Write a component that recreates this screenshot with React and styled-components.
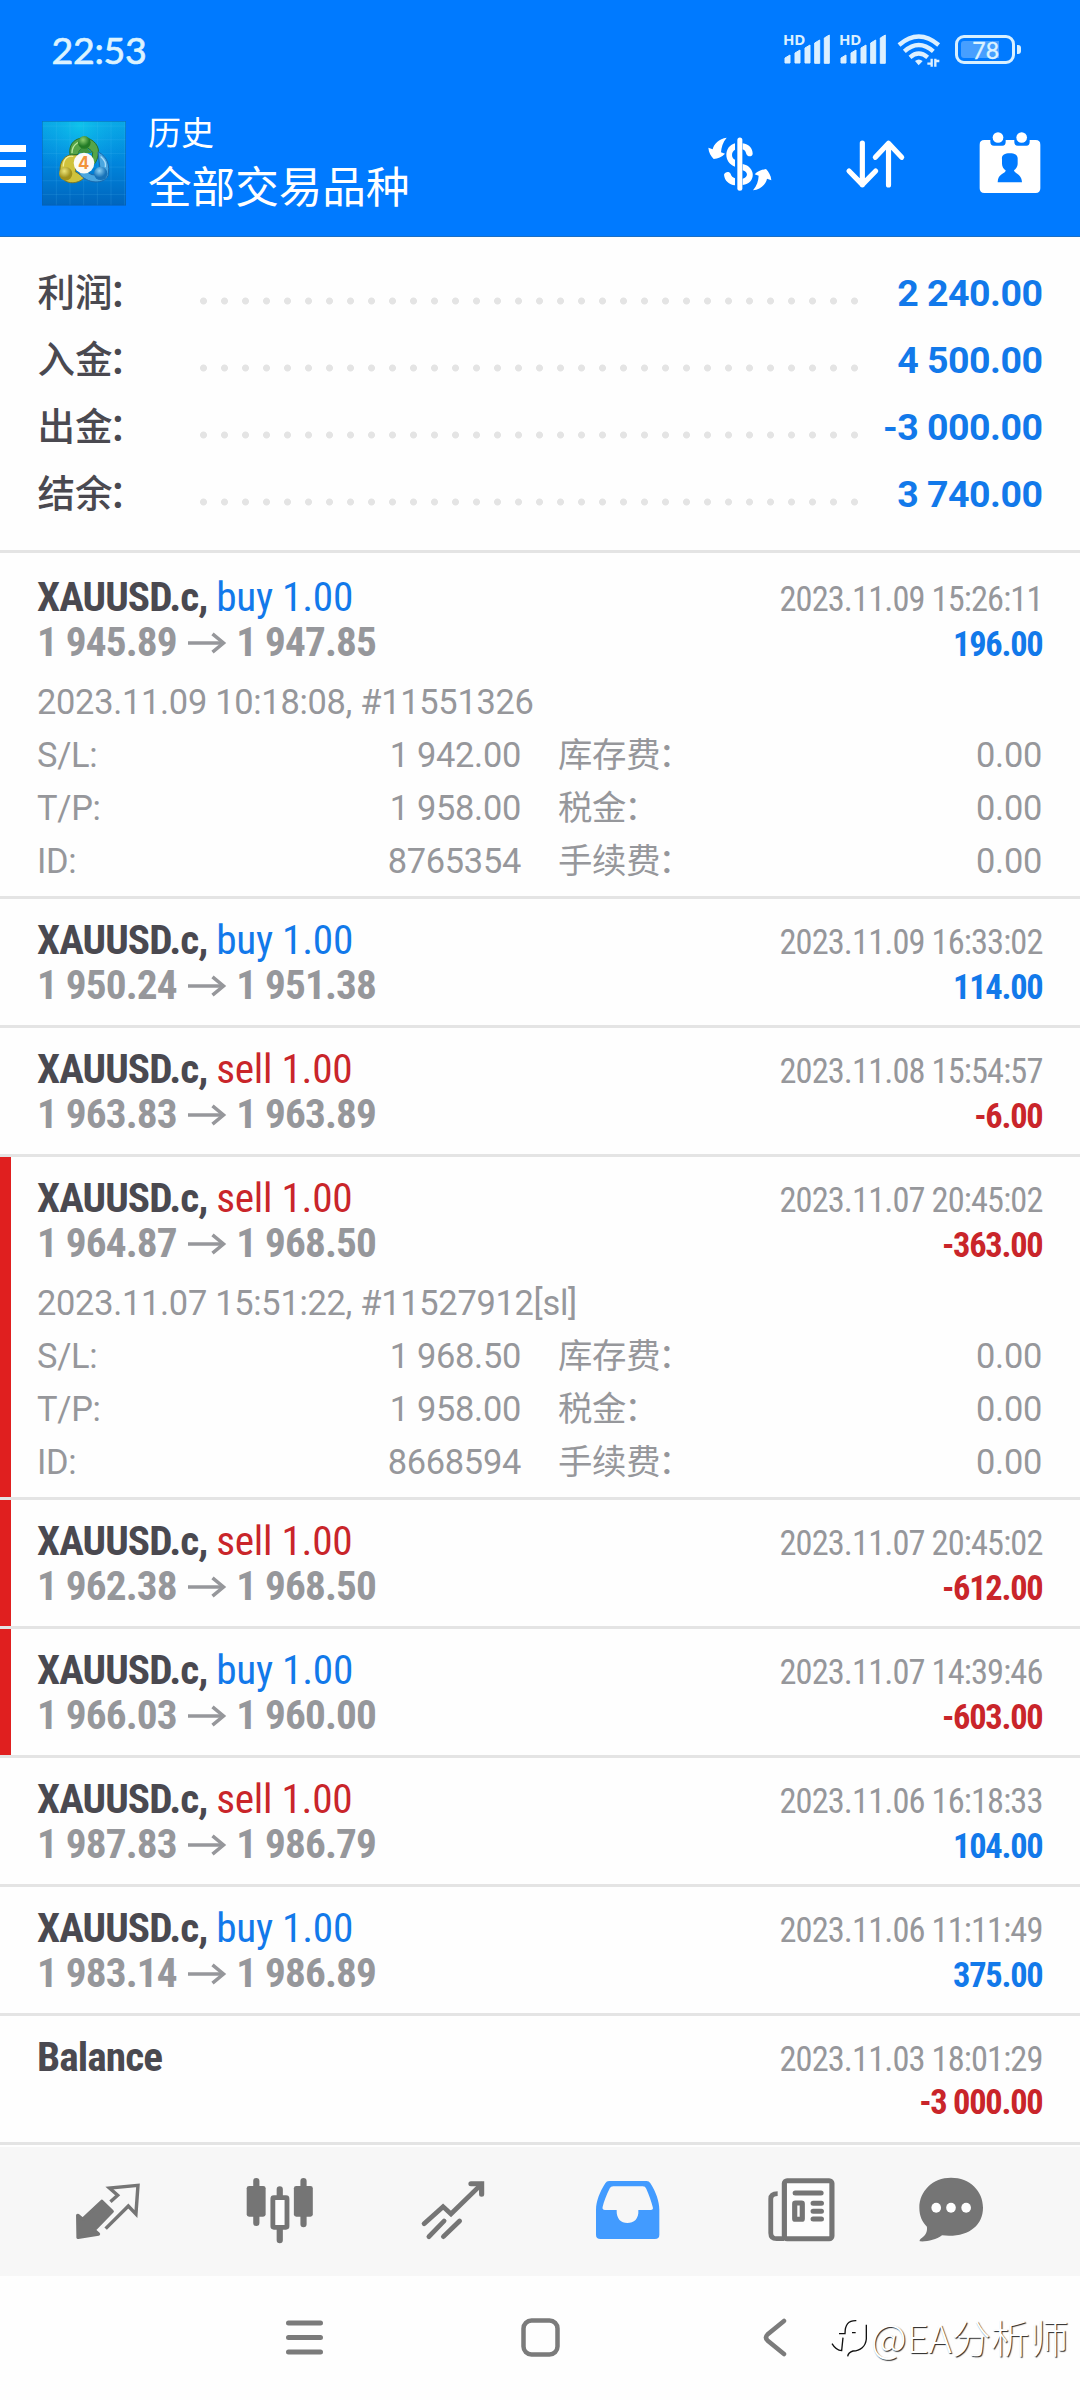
import React from "react";
import styled, { createGlobalStyle } from "styled-components";

const BLUE = "#1279ea";
const RED = "#c9252a";
const GRAY = "#96979b";
const DARK = "#4a4950";

const GlobalStyle = createGlobalStyle`
  * { box-sizing: border-box; }
  body { margin: 0; background: #fefefe; }
`;

const Screen = styled.div`
  width: 1080px;
  height: 2400px;
  display: flex;
  flex-direction: column;
  overflow: hidden;
  background: #fefefe;
  font-family: Roboto, "Noto Sans CJK SC", sans-serif;
`;

const Icon = styled.svg`
  display: block;
  flex: none;
  overflow: visible;
`;

/* ---------- header ---------- */

const Header = styled.header`
  height: 237px;
  background: #007aff;
  border-bottom: 1px solid #1b6fc4;
  color: #fff;
`;

const StatusBar = styled.div`
  height: 100px;
  padding: 0 59px 0 51.5px;
  display: flex;
  align-items: center;
`;

const Clock = styled.span`
  flex: 1;
  font-family: Lato, sans-serif;
  font-size: 37.5px;
  line-height: 46px;
  letter-spacing: -0.3px;
  color: #dcf3ff;
  -webkit-text-stroke: 0.7px #dcf3ff;
  padding-bottom: 1px;
`;

const StatusIcons = styled.div`
  display: flex;
  align-items: flex-start;
  height: 32px;
  color: #dcf0ff;
`;

const Signal = styled.div`
  width: 46px;
  margin-right: 10px;
  display: grid;
`;

const SignalLabel = styled.span`
  grid-area: 1 / 1;
  margin: -1px 0 0 -2px;
  font-family: "Open Sans", sans-serif;
  font-weight: 700;
  font-size: 15px;
  line-height: 13px;
  letter-spacing: -0.3px;
`;

const SignalBars = styled(Icon)`
  grid-area: 1 / 1;
  margin-left: -2px;
`;

const Battery = styled.div`
  display: flex;
  align-items: center;
  margin: 1px 0 0 14px;
`;

const BatteryBody = styled.div`
  width: 60px;
  height: 29px;
  border: 3px solid #d8f0ff;
  border-radius: 9px;
  padding: 3px;
`;

const BatteryCharge = styled.div`
  width: 38px;
  height: 17px;
  border-radius: 3px 0 0 3px;
  background: #479fff;
  text-align: right;
  font-family: Lato, sans-serif;
  font-size: 23px;
  line-height: 18px;
  color: #dcf3ff;
  -webkit-text-stroke: 0.4px #dcf3ff;
`;

const BatteryTip = styled.div`
  width: 4px;
  height: 9px;
  margin-left: 2px;
  border-radius: 0 3px 3px 0;
  background: #d8f0ff;
`;

const AppBar = styled.div`
  height: 136px;
  padding: 0 38px 9px 0;
  display: flex;
  align-items: center;
`;

const MenuBars = styled.div`
  width: 26px;
  height: 38px;
  margin-right: 16px;
  display: flex;
  flex-direction: column;
  justify-content: space-between;
`;

const MenuBar = styled.span`
  height: 7px;
  background: #fff;
`;

const Titles = styled.div`
  flex: 1;
  margin-left: 22px;
  padding-bottom: 4px;
`;

const Caption = styled.div`
  font-size: 33px;
  line-height: 54px;
`;

const Heading = styled.div`
  font-size: 43.6px;
  line-height: 55px;
`;

const Actions = styled.div`
  display: flex;
  align-items: center;
  gap: 72px;
`;

/* ---------- summary ---------- */

const Summary = styled.section`
  padding: 23px 37.5px 22px;
  border-bottom: 3px solid #e4e4e4;
`;

const SummaryRow = styled.div`
  height: 67px;
  line-height: 67px;
  display: flex;
  font-size: 37.5px;
`;

const SummaryLabel = styled.span`
  width: 155px;
  font-weight: 500;
  color: ${DARK};
`;

const Colon = styled.span`
  margin-left: ${(p) => p.$shift}px;
`;

const Dots = styled.span`
  width: 672px;
  height: 8px;
  margin-top: 37px;
  background: radial-gradient(circle at center, #e4e4e4 3.1px, transparent 3.9px) 0 0 / 21px 8px repeat-x;
`;

const SummaryValue = styled.span`
  flex: 1;
  text-align: right;
  font-weight: 700;
  letter-spacing: -0.5px;
  white-space: nowrap;
  color: ${BLUE};
`;

/* ---------- deals ---------- */

const DealList = styled.main`
  padding-top: 3px;
`;

const DealItem = styled.article`
  display: flex;
  border-bottom: 3px solid #e4e4e4;
`;

const Stripe = styled.span`
  width: 11px;
  background: ${(p) => (p.$on ? "#e01f1f" : "transparent")};
`;

const DealBody = styled.div`
  flex: 1;
  padding: 19px 37.5px ${(p) => (p.$open ? 8 : 17)}px 26px;
`;

const Line = styled.div`
  height: 45px;
  line-height: 45px;
  display: flex;
  align-items: baseline;
  justify-content: space-between;
  font-family: "Roboto Condensed", Roboto, sans-serif;
  white-space: nowrap;
`;

const Symbol = styled.span`
  font-size: 41.25px;
  font-weight: 700;
  letter-spacing: -0.9px;
  color: ${DARK};
`;

const Side = styled.span`
  font-weight: 400;
  letter-spacing: -0.25px;
  color: ${(p) => (p.$sell ? RED : BLUE)};
`;

const Prices = styled.span`
  display: flex;
  align-items: baseline;
  font-size: 41.25px;
  font-weight: 700;
  letter-spacing: -0.85px;
  color: ${GRAY};
`;

const Arrow = styled(Icon)`
  margin: 0 10.5px 0 11px;
  align-self: center;
`;

const When = styled.span`
  font-size: 34.4px;
  letter-spacing: -0.88px;
  color: ${GRAY};
`;

const Profit = styled.span`
  font-size: 34.4px;
  font-weight: 700;
  letter-spacing: -1.25px;
  color: ${(p) => (p.$loss ? RED : BLUE)};
`;

const Details = styled.div`
  margin-top: 11px;
  display: grid;
  grid-template-columns: 484px 484px;
  column-gap: 37px;
  font-size: 34.4px;
  line-height: 53px;
  letter-spacing: -0.28px;
  color: ${GRAY};
`;

const OpenInfo = styled.div`
  grid-column: 1 / -1;
  height: 53px;
`;

const Field = styled.div`
  height: 53px;
  display: flex;
  justify-content: space-between;
`;

/* ---------- bottom bars ---------- */

const TabBar = styled.nav`
  height: 129px;
  margin-top: 2px;
  padding-left: 21.6px;
  display: grid;
  grid-template-columns: 172px 172.8px 172.8px 176.6px 171.8px 126.4px;
  background: #f7f7f7;
`;

const Tab = styled.div`
  display: flex;
  justify-content: center;
  padding-top: ${(p) => p.$top}px;
`;

const SystemNav = styled.div`
  height: 124px;
  padding: 42px 0 0 286px;
  display: flex;
  align-items: flex-start;
`;

const NavIcon = styled(Icon)`
  margin-right: ${(p) => p.$gap}px;
`;

const Watermark = styled.div`
  display: flex;
  align-items: center;
  margin-top: -4px;
  font-family: "Noto Sans CJK SC", sans-serif;
  font-weight: 300;
  font-size: 39px;
  line-height: 44px;
  color: #fff;
  text-shadow: 1px 1px 1px #222;
  white-space: nowrap;
`;

const WatermarkMark = styled(Icon)`
  margin-right: 3px;
`;

/* ---------- drawings ---------- */

function SignalIcon() {
  const bars = [[2, 21, 8], [12, 16, 13], [22, 11, 18], [31.7, 6, 23.3], [41.3, 1, 28.3]];
  return (
    <Signal>
      <SignalLabel>HD</SignalLabel>
      <SignalBars width="48" height="31" viewBox="0 0 48 31" fill="#dcf0ff">
        {bars.map(([x, y, h]) => (
          <path key={x} d={`M${x} ${y + 3}L${x + 5} ${y}V${y + h}H${x}Z`} stroke="#dcf0ff" strokeWidth="1" strokeLinejoin="round" />
        ))}
      </SignalBars>
    </Signal>
  );
}

function WifiIcon() {
  return (
    <Icon width="44" height="33" viewBox="714 101 132 99" fill="none" stroke="#dcf0ff" strokeWidth="13">
      <path d="M720 134Q779 83 839 134M736 153Q779 115 823 153M753 171Q779 148 806 171" />
      <path d="M768 182Q779 173 791 182L779 195Z" fill="#dcf0ff" stroke="none" />
      <path d="M818 175V199M805 190H818M829 199V175M829 182H841" strokeWidth="7" />
    </Icon>
  );
}

function DollarIcon() {
  const swoop = "M199 411C176 414 160 430 157 446L144 441C145 456 152 466 160 475C173 473 184 469 194 459L182 455C183 440 187 425 199 411Z";
  return (
    <Icon width="66.7" height="60" viewBox="140 400 200 180" fill="#fff">
      <path d="M238.500 418V563" stroke="#fff" strokeWidth="15" strokeLinecap="round" />
      <path d="M224 428C190 437 189 486 224 498V477C212 472 212 453 224 447Z" />
      <path d="M247 428C266 430 277 444 277 459C276 469 262 470 258 460C256 452 253 448 247 446Z" />
      <path d="M247 490C287 498 288 548 247 553V534C264 531 264 513 247 509Z" />
      <path d="M224 533C217 530 213 527 211 520C207 511 194 513 191 522C193 541 206 551 224 554Z" />
      <path d={swoop} />
      <path d={swoop} transform="rotate(180 238.500 490)" />
    </Icon>
  );
}

function SortIcon() {
  return (
    <Icon width="60.700" height="60" viewBox="555 400 182 180" fill="none" stroke="#fff" strokeWidth="15.500" strokeLinecap="round" strokeLinejoin="round">
      <path d="M607 427V552M567 511L607 552L647 511M685.500 553V428M646 470L685.500 428L725 470" />
    </Icon>
  );
}

function CalendarIcon() {
  return (
    <Icon width="64" height="64" viewBox="955 395 192 192">
      <path fill="#fff" d="M974 419H992V425Q992 436 1003 436H1028Q1038 436 1038 425V419H1064V425Q1064 436 1074 436H1100Q1110 436 1110 425V419H1128Q1142 419 1142 433V564Q1142 578 1128 578H974Q960 578 960 564V433Q960 419 974 419Z" />
      <circle cx="1015" cy="411.500" r="16" fill="#fff" />
      <circle cx="1086" cy="411.500" r="16" fill="#fff" />
      <path fill="#007aff" d="M1050 459C1066 459 1075 465 1074 477V490C1074 499 1068 506 1063 510C1063 520 1086 519 1087 546H1014C1014 519 1038 521 1038 510C1032 506 1027 499 1027 490V477C1025 465 1034 459 1050 459Z" />
    </Icon>
  );
}

function Logo() {
  const grid = [31, 72, 113, 154, 195, 236];
  return (
    <Icon width="84" height="84.500" viewBox="18 16 252 253">
      <defs>
        <linearGradient id="sky" x1="0" y1="0" x2="0" y2="1">
          <stop offset="0" stopColor="#08a8e4" />
          <stop offset=".5" stopColor="#0085dc" />
          <stop offset="1" stopColor="#0065bd" />
        </linearGradient>
        <radialGradient id="glow" cx=".45" cy=".05" r=".6">
          <stop offset="0" stopColor="#10d0ee" stopOpacity=".7" />
          <stop offset="1" stopColor="#10a0ee" stopOpacity="0" />
        </radialGradient>
        <radialGradient id="green" cx=".4" cy=".3"><stop offset="0" stopColor="#8ed070" /><stop offset="1" stopColor="#237c26" /></radialGradient>
        <radialGradient id="gold" cx=".4" cy=".3"><stop offset="0" stopColor="#eee67a" /><stop offset="1" stopColor="#a1911c" /></radialGradient>
        <radialGradient id="azure" cx=".4" cy=".3"><stop offset="0" stopColor="#8fd2f4" /><stop offset="1" stopColor="#1772b8" /></radialGradient>
      </defs>
      <rect x="18" y="16" width="252" height="253" fill="url(#sky)" />
      <rect x="18" y="16" width="252" height="253" fill="url(#glow)" />
      {grid.map((g) => (
        <path key={g} d={`M18 ${g}H270M${g + 30} 16V269`} stroke="#5fc8f5" strokeOpacity=".22" strokeWidth="2" />
      ))}
      <rect x="19" y="17" width="250" height="251" fill="none" stroke="#0c5cab" strokeWidth="2" strokeOpacity=".7" />
      <path d="M124 118C74 108 64 160 78 186C96 210 132 202 146 184L118 168Z" fill="#cfc23c" stroke="#7f7a22" strokeWidth="3" />
      <path d="M102 118C96 80 122 66 146 66C172 68 194 92 186 120C182 140 170 154 166 146L170 110C150 84 130 96 126 116Z" fill="#55a548" stroke="#287228" strokeWidth="3" />
      <path d="M186 108C216 124 222 150 216 180C204 206 154 206 128 172L152 166C168 184 190 180 192 158Z" fill="#4aa6df" stroke="#1a69ac" strokeWidth="3" />
      <path d="M126 112L144 88L168 112Z" fill="#3f9440" />
      <path d="M108 112C108 82 136 72 150 80" fill="none" stroke="#b9e7a0" strokeWidth="4" />
      <path d="M82 152C82 128 96 118 112 122" fill="none" stroke="#f3ee9c" strokeWidth="4" />
      <path d="M194 122C208 134 210 146 208 154" fill="none" stroke="#a9dcf8" strokeWidth="4" />
      <circle cx="145" cy="80" r="19" fill="url(#green)" />
      <circle cx="89" cy="174" r="20" fill="url(#gold)" />
      <circle cx="194" cy="173" r="20" fill="url(#azure)" />
      <circle cx="144" cy="142" r="31" fill="#fbfaf6" />
      <text x="143" y="160" textAnchor="middle" fontFamily="Inter, sans-serif" fontWeight="700" fontSize="50" fill="#f2933a">4</text>
    </Icon>
  );
}

const G = "#757575";

function QuotesIcon() {
  return (
    <Icon width="65.400" height="66.700" viewBox="217 138 190 200" preserveAspectRatio="none">
      <path d="M225 256L239 268L295 214L325 244L272 300L285 312L226 322Z" fill={G} stroke={G} strokeWidth="10" strokeLinejoin="round" />
      <path d="M306 296L372 228L394 252L400 166L317 174L341 196L320 215" fill="none" stroke={G} strokeWidth="10" />
    </Icon>
  );
}

function ChartIcon() {
  return (
    <Icon width="67.500" height="66.700" viewBox="715 142 196 200" preserveAspectRatio="none">
      <path d="M745 154V280M882 154V284M813 179V205M813 295V332" stroke={G} strokeWidth="18" strokeLinecap="round" />
      <rect x="717" y="169" width="55" height="92" rx="7" fill={G} />
      <rect x="854" y="169" width="55" height="92" rx="7" fill={G} />
      <rect x="793" y="204" width="41" height="89" rx="3" fill="#fdfdfd" stroke={G} strokeWidth="14" />
    </Icon>
  );
}

function TradeIcon() {
  return (
    <Icon width="63.400" height="66.700" viewBox="1223 138 184 200" preserveAspectRatio="none" fill="none" stroke={G} strokeWidth="14">
      <path d="M1232 281L1287 230L1310 252L1398 163" strokeLinecap="round" />
      <path d="M1368 161H1399V193" strokeLinecap="round" strokeWidth="15" />
      <path d="M1246 320L1290 273M1288 320L1335 273" strokeLinecap="round" />
    </Icon>
  );
}

function HistoryIcon() {
  return (
    <Icon width="63.700" height="60" viewBox="161 147 185 180" preserveAspectRatio="none">
      <path fillRule="evenodd" fill="#429bff" d="M199 153H308Q315 153 319 160C335 185 345 215 345 239V314Q345 327 332 327H174Q161 327 161 314V239C161 215 172 185 188 160Q192 153 199 153ZM211 169Q204 169 201 175C191 195 184 215 180 232Q179 240 187 240H221C220 267 234 279 252 279C271 279 286 267 284 240H320Q328 240 326 232C322 215 315 195 307 176Q304 169 297 169Z" />
    </Icon>
  );
}

function NewsIcon() {
  return (
    <Icon width="66.500" height="66.700" viewBox="663 142 193 200" preserveAspectRatio="none" fill="none" stroke={G}>
      <rect x="710.500" y="153" width="138" height="174" rx="8" fill="#fdfdfd" strokeWidth="15" />
      <path d="M691 192Q671 192 671 208V310Q671 327 688 327H710" strokeWidth="14" />
      <path d="M742 190H817M794 221H818M794 244.500H818M794 268H818" strokeWidth="15" strokeLinecap="round" />
      <rect x="740.500" y="220" width="22" height="49" rx="2" strokeWidth="15" />
    </Icon>
  );
}

function MessagesIcon() {
  return (
    <Icon width="64" height="66.700" viewBox="1100 142 186 200" preserveAspectRatio="none" fill={G}>
      <path d="M1193 144C1248 144 1286 184 1286 234C1286 290 1240 325 1167 317C1150 330 1125 336 1104 335Q1099 334 1105 327C1119 318 1125 306 1123 291C1109 276 1101 258 1101 234C1101 184 1140 144 1193 144Z" />
      <ellipse cx="1150" cy="234" rx="14" ry="15" fill="#fff" />
      <ellipse cx="1193" cy="234" rx="14" ry="15" fill="#fff" />
      <ellipse cx="1237" cy="234" rx="14" ry="15" fill="#fff" />
    </Icon>
  );
}

/* ---------- data ---------- */

const summary = [
  ["利润", "2 240.00"],
  ["入金", "4 500.00"],
  ["出金", "-3 000.00"],
  ["结余", "3 740.00"],
];

const deals = [
  { side: "buy", from: "1 945.89", to: "1 947.85", when: "2023.11.09 15:26:11", profit: "196.00",
    info: { opened: "2023.11.09 10:18:08, #11551326", sl: "1 942.00", tp: "1 958.00", id: "8765354" } },
  { side: "buy", from: "1 950.24", to: "1 951.38", when: "2023.11.09 16:33:02", profit: "114.00" },
  { side: "sell", from: "1 963.83", to: "1 963.89", when: "2023.11.08 15:54:57", profit: "-6.00" },
  { side: "sell", from: "1 964.87", to: "1 968.50", when: "2023.11.07 20:45:02", profit: "-363.00", marked: true,
    info: { opened: "2023.11.07 15:51:22, #11527912[sl]", sl: "1 968.50", tp: "1 958.00", id: "8668594" } },
  { side: "sell", from: "1 962.38", to: "1 968.50", when: "2023.11.07 20:45:02", profit: "-612.00", marked: true },
  { side: "buy", from: "1 966.03", to: "1 960.00", when: "2023.11.07 14:39:46", profit: "-603.00", marked: true },
  { side: "sell", from: "1 987.83", to: "1 986.79", when: "2023.11.06 16:18:33", profit: "104.00" },
  { side: "buy", from: "1 983.14", to: "1 986.89", when: "2023.11.06 11:11:49", profit: "375.00" },
  { when: "2023.11.03 18:01:29", profit: "-3 000.00" },
];

function Pair({ name, value, wide }) {
  return (
    <Field>
      <span>
        {name}
        {wide && <Colon $shift={-2}>：</Colon>}
      </span>
      <span>{value}</span>
    </Field>
  );
}

function Deal({ side, from, to, when, profit, marked, info }) {
  return (
    <DealItem>
      <Stripe $on={marked} />
      <DealBody $open={!!info}>
        <Line>
          <Symbol>
            {side ? "XAUUSD.c, " : "Balance"}
            {side && <Side $sell={side === "sell"}>{side} 1.00</Side>}
          </Symbol>
          <When>{when}</When>
        </Line>
        <Line>
          <Prices>
            {from && (
              <>
                <span>{from}</span>
                <Arrow width="38" height="20" viewBox="0 0 38 20" fill="none" stroke={GRAY} strokeWidth="3.700">
                  <path d="M0 10H36" />
                  <path d="M24.500 .8L35.500 10L24.500 19.200" strokeWidth="3.500" />
                </Arrow>
                <span>{to}</span>
              </>
            )}
          </Prices>
          <Profit $loss={profit.startsWith("-")}>{profit}</Profit>
        </Line>
        {info && (
          <Details>
            <OpenInfo>{info.opened}</OpenInfo>
            <Pair name="S/L:" value={info.sl} />
            <Pair name="库存费" value="0.00" wide />
            <Pair name="T/P:" value={info.tp} />
            <Pair name="税金" value="0.00" wide />
            <Pair name="ID:" value={info.id} />
            <Pair name="手续费" value="0.00" wide />
          </Details>
        )}
      </DealBody>
    </DealItem>
  );
}

export default function App() {
  return (
    <Screen>
      <GlobalStyle />
      <Header>
        <StatusBar>
          <Clock>22:53</Clock>
          <StatusIcons>
            <SignalIcon />
            <SignalIcon />
            <WifiIcon />
            <Battery>
              <BatteryBody>
                <BatteryCharge>78</BatteryCharge>
              </BatteryBody>
              <BatteryTip />
            </Battery>
          </StatusIcons>
        </StatusBar>
        <AppBar>
          <MenuBars>
            <MenuBar />
            <MenuBar />
            <MenuBar />
          </MenuBars>
          <Logo />
          <Titles>
            <Caption>历史</Caption>
            <Heading>全部交易品种</Heading>
          </Titles>
          <Actions>
            <DollarIcon />
            <SortIcon />
            <CalendarIcon />
          </Actions>
        </AppBar>
      </Header>
      <Summary>
        {summary.map(([label, value]) => (
          <SummaryRow key={label}>
            <SummaryLabel>
              {label}
              <Colon $shift={-4}>：</Colon>
            </SummaryLabel>
            <Dots />
            <SummaryValue>{value}</SummaryValue>
          </SummaryRow>
        ))}
      </Summary>
      <DealList>
        {deals.map((deal) => (
          <Deal key={deal.when + deal.profit} {...deal} />
        ))}
      </DealList>
      <TabBar>
        <Tab $top={29}><QuotesIcon /></Tab>
        <Tab $top={30}><ChartIcon /></Tab>
        <Tab $top={29}><TradeIcon /></Tab>
        <Tab $top={32}><HistoryIcon /></Tab>
        <Tab $top={30}><NewsIcon /></Tab>
        <Tab $top={30}><MessagesIcon /></Tab>
      </TabBar>
      <SystemNav>
        <NavIcon $gap={198} width="37" height="39" viewBox="0 0 37 39" stroke="#7b7b7b" strokeWidth="5" strokeLinecap="round">
          <path d="M2.500 5H34.500M2.500 19.500H34.500M2.500 34H34.500" />
        </NavIcon>
        <NavIcon $gap={203} width="39" height="39" viewBox="0 0 39 39" fill="none" stroke="#7b7b7b" strokeWidth="4.500">
          <rect x="2.500" y="2.500" width="34" height="34" rx="8" />
        </NavIcon>
        <NavIcon $gap={44} width="24" height="39" viewBox="0 0 24 39" fill="none" stroke="#7b7b7b" strokeWidth="4.500" strokeLinecap="round">
          <path d="M21 3L4.500 16.500Q1.500 19.500 4.500 22.500L21 36" />
        </NavIcon>
        <Watermark>
          <WatermarkMark width="37" height="40" viewBox="30 69 111 120" fill="none">
            <path d="M54 122H72C72 95 82 82 106 83M93 119H104M66 134L62 173Q45 172 33 152M136 95V138C134 160 118 174 96 174Q82 178 80 190" stroke="#111" strokeWidth="4" />
          </WatermarkMark>
          @EA分析师
        </Watermark>
      </SystemNav>
    </Screen>
  );
}
